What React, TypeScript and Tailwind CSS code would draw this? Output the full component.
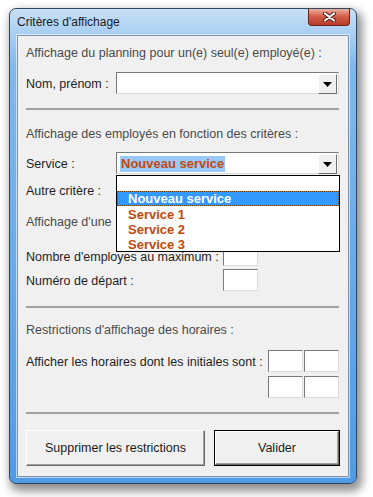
import React from 'react';

const sunken = 'border border-t-[#7a7a7a] border-l-[#7a7a7a] border-b-[#dcdcdc] border-r-[#dcdcdc] bg-white';

function DropButton() {
    return (
        <div className="w-[19px] h-[20px] mr-px bg-[#f0f0f0] border border-t-white border-l-white border-b-[#6e6e6e] border-r-[#6e6e6e] flex items-center justify-center">
            <svg width="9" height="5" viewBox="0 0 9 5">
                <polygon points="0,0 9,0 4.5,5" fill="#000" />
            </svg>
        </div>
    );
}

function Combo({ children }: { children?: React.ReactNode }) {
    return (
        <div className={`w-[223px] h-[22px] ${sunken} flex items-start pt-px`}>
            <div className="flex-1 h-[20px] flex items-center">{children}</div>
            <DropButton />
        </div>
    );
}

function Box() {
    return <div className={`w-[35px] h-[22px] ${sunken}`} />;
}

function Sep() {
    return <div className="w-[313px] h-[2px] bg-[#a0a0a0]" />;
}

function Heading({ text, className = '' }: { text: string; className?: string }) {
    return <div className={`text-[12.5px] leading-[16px] text-[#4a4a4a] whitespace-nowrap ${className}`}>{text}</div>;
}

const services = ['Service 1', 'Service 2', 'Service 3'];

export default function App() {
    return (
        <div className="w-[373px] h-[497px] bg-white pl-[9px] pt-[8px] font-['Liberation_Sans',Arial,sans-serif]">
            <div className="w-[348px] h-[476px] rounded-[7px] border border-[#30455e] bg-linear-to-b from-[#c8e0f6] via-[#80b8ed] via-[12%] to-[#4f9be6] shadow-[3px_5px_10px_2px_rgba(0,0,0,0.45)] flex flex-col">
                {/* title bar */}
                <div className="h-[26px] flex items-start justify-between">
                    <div className="self-center pl-[7px] text-[12px] text-[#1a1a1a] leading-none">Critères d'affichage</div>
                    <div className="mr-[6px] w-[42px] h-[17px] rounded-b-[4px] border border-t-0 border-[#6b2118] bg-linear-to-b from-[#eab0a4] via-[#d2604c] via-[45%] to-[#b93a2a] flex items-center justify-center">
                        <svg width="13" height="10" viewBox="0 0 13 10">
                            <path d="M2 1.5 L11 8.5 M11 1.5 L2 8.5" stroke="#4a1a14" strokeWidth="4" strokeLinecap="round" />
                            <path d="M2 1.5 L11 8.5 M11 1.5 L2 8.5" stroke="#ffffff" strokeWidth="2.2" strokeLinecap="round" />
                        </svg>
                    </div>
                </div>

                {/* client area */}
                <div className="mx-[7px] h-[442px] border border-[#7d92ad] shadow-[0_0_0_1px_rgba(255,255,255,0.6)] bg-[#f0f0f0] px-[8px] flex flex-col text-[12.5px] text-[#1e1e1e]">
                    <Heading text="Affichage du planning pour un(e) seul(e) employé(e) :" className="mt-[9px]" />
                    <div className="mt-[11px] h-[22px] flex items-center">
                        <div className="w-[90px] pt-[2px]">Nom, prénom :</div>
                        <Combo />
                    </div>

                    <div className="mt-[14px]"><Sep /></div>

                    <Heading text="Affichage des employés en fonction des critères :" className="mt-[16px]" />
                    <div className="mt-[10px] h-[22px] flex items-center">
                        <div className="w-[90px] pt-[2px]">Service :</div>
                        <div className="relative">
                            <Combo>
                                <span className="ml-[3px] h-[16px] px-px bg-[#99c8fa] text-[13px] leading-[16px] font-bold text-[#c2490c]">Nouveau service</span>
                            </Combo>
                            <div className="absolute left-0 top-[calc(100%+1px)] w-[224px] h-[77px] overflow-hidden border border-black bg-white z-10 text-[13px] font-bold">
                                <div className="h-[15px]" />
                                <div className="h-[15px] bg-[#3399ff] border border-dotted border-[#6b3a00] pl-[10px] text-white leading-[14px]">Nouveau service</div>
                                {services.map((s) => (
                                    <div key={s} className="h-[15px] pl-[11px] leading-[17px] text-[#c2490c]">{s}</div>
                                ))}
                            </div>
                        </div>
                    </div>
                    <div className="mt-[5px] h-[22px] flex items-center">
                        <div className="w-[90px] pt-[2px]">Autre critère :</div>
                        <Combo />
                    </div>

                    <Heading text="Affichage d'une" className="mt-[13px]" />
                    <div className="mt-[14px] h-[22px] flex items-center">
                        <div className="w-[197px] pt-[3px] leading-[14px]">Nombre d'employes au maximum :</div>
                        <Box />
                    </div>
                    <div className="mt-[3px] h-[22px] flex items-center">
                        <div className="w-[197px] pt-[2px]">Numéro de départ :</div>
                        <Box />
                    </div>

                    <div className="mt-[15px]"><Sep /></div>

                    <Heading text="Restrictions d'affichage des horaires :" className="mt-[14px]" />
                    <div className="mt-[12px] flex items-start">
                        <div className="w-[242px] h-[22px] flex items-center pt-[2px]">Afficher les horaires dont les initiales sont :</div>
                        <div className="grid grid-cols-2 gap-x-px gap-y-[4px]">
                            <Box />
                            <Box />
                            <Box />
                            <Box />
                        </div>
                    </div>

                    <div className="mt-[14px]"><Sep /></div>

                    <div className="mt-[16px] flex justify-between">
                        <button className="w-[179px] h-[36px] bg-[#f0f0f0] border border-t-white border-l-white border-b-[#6a6a6a] border-r-[#6a6a6a] shadow-[inset_-1px_-1px_0_#a0a0a0] text-[12.5px] text-[#1a1a1a]">
                            Supprimer les restrictions
                        </button>
                        <div className="w-[126px] h-[36px] border border-black">
                            <button className="w-full h-full bg-[#f0f0f0] border border-t-white border-l-white border-b-[#6a6a6a] border-r-[#6a6a6a] shadow-[inset_-1px_-1px_0_#a0a0a0] text-[12.5px] text-[#1a1a1a]">
                                Valider
                            </button>
                        </div>
                    </div>
                </div>
            </div>
        </div>
    );
}
